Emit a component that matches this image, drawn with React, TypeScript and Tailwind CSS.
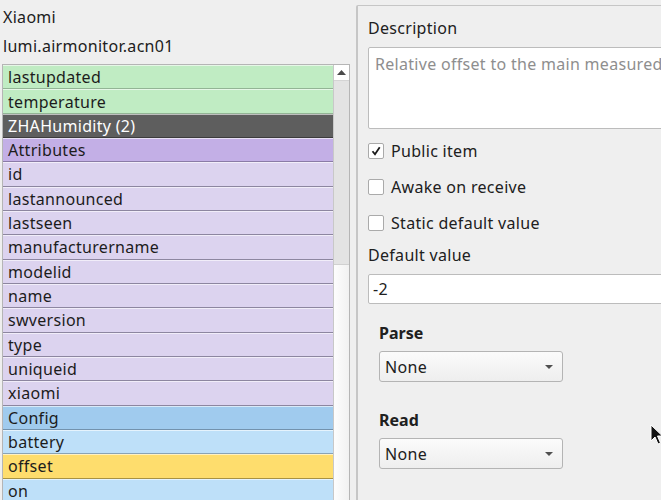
import React from 'react'

type Kind = 'green' | 'dark' | 'group' | 'attr' | 'config' | 'blue' | 'yellow'

const rowStyles: Record<Kind, string> = {
  green: 'bg-[#c0ecc3] border-b-[#93b495] text-[#1c1c1c]',
  dark: 'bg-[#5e5e5e] border-b-[#3c3c3c] text-white',
  group: 'bg-[#c3afe6] border-b-[#8a7ba6] text-[#1c1c1c]',
  attr: 'bg-[#dcd3ef] border-b-[#8d86a0] text-[#1c1c1c]',
  config: 'bg-[#a0cbee] border-b-[#7392ad] text-[#1c1c1c]',
  blue: 'bg-[#bee0f9] border-b-[#89a3b5] text-[#1c1c1c]',
  yellow: 'bg-[#fedd6d] border-b-[#a89243] text-[#1c1c1c]',
}

const rows: { label: string; kind: Kind }[] = [
  { label: 'lastupdated', kind: 'green' },
  { label: 'temperature', kind: 'green' },
  { label: 'ZHAHumidity (2)', kind: 'dark' },
  { label: 'Attributes', kind: 'group' },
  { label: 'id', kind: 'attr' },
  { label: 'lastannounced', kind: 'attr' },
  { label: 'lastseen', kind: 'attr' },
  { label: 'manufacturername', kind: 'attr' },
  { label: 'modelid', kind: 'attr' },
  { label: 'name', kind: 'attr' },
  { label: 'swversion', kind: 'attr' },
  { label: 'type', kind: 'attr' },
  { label: 'uniqueid', kind: 'attr' },
  { label: 'xiaomi', kind: 'attr' },
  { label: 'Config', kind: 'config' },
  { label: 'battery', kind: 'blue' },
  { label: 'offset', kind: 'yellow' },
  { label: 'on', kind: 'blue' },
]

export default function App() {
  return (
    <div
      className="relative w-[661px] h-[500px] overflow-hidden bg-[#efefef] text-[16px] tracking-[0.3px] text-[#202020] flex"
      style={{ fontFamily: '"Noto Sans", "Open Sans", sans-serif' }}
    >
      {/* Left column - device + item list */}
      <div className="w-[350px] flex-shrink-0 pl-[2px] flex flex-col">
        <div className="h-[18px] mt-[8px] pl-[1px] leading-[18px]">Xiaomi</div>
        <div className="h-[18px] mt-[11px] pl-[1px] leading-[18px]">lumi.airmonitor.acn01</div>

        <div className="mt-[9px] flex border-l border-t border-r border-[#b5b5b5] h-[440px]">
          <div className="flex-1 flex flex-col">
            {rows.map((r) => (
              <div
                key={r.label}
                className={`h-[24.33px] flex-shrink-0 flex items-center pl-[5px] border-t border-t-white/60 border-b ${rowStyles[r.kind]}`}
              >
                {r.label}
              </div>
            ))}
          </div>

          {/* Scrollbar */}
          <div className="w-[16px] flex-shrink-0 flex flex-col border-l border-[#c8c8c8]">
            <div className="h-[16px] bg-white border-b border-[#d4d4d4] flex items-center justify-center">
              <svg width="9" height="5" viewBox="0 0 9 5">
                <path d="M0 5 L4.5 0 L9 5 Z" fill="#4a4a4a" />
              </svg>
            </div>
            <div className="h-[183px] bg-[#e3e3e3]" />
            <div className="flex-1 bg-gradient-to-r from-[#fdfdfd] to-[#f1f1f1] border-t border-[#d0d0d0]" />
          </div>
        </div>
      </div>

      {/* Right column - item settings */}
      <div className="ml-[6px] mt-[5px] w-[330px] flex-shrink-0 border-l-2 border-t border-[#c6c6c6] rounded-tl-[2px] pl-[10px] flex flex-col">
        <div className="h-[18px] mt-[13px] leading-[18px]">Description</div>
        <div className="mt-[10px] h-[82px] bg-white border border-[#bcbcbc] rounded-[2px] px-[6px] pt-[7px] leading-[18px] text-[#8e8e8e] whitespace-nowrap overflow-hidden">
          Relative offset to the main measured value
        </div>

        <CheckRow label="Public item" checked className="mt-[14px]" />
        <CheckRow label="Awake on receive" className="mt-[20px]" />
        <CheckRow label="Static default value" className="mt-[20px]" />

        <div className="h-[18px] mt-[15px] leading-[18px]">Default value</div>
        <div className="mt-[10px] h-[30px] bg-white border border-[#bcbcbc] rounded-[2px] pl-[4px] flex items-center">
          -2
        </div>

        <div className="pl-[11px] flex flex-col">
          <div className="h-[18px] mt-[20px] leading-[18px] font-bold tracking-normal">Parse</div>
          <Select className="mt-[9px]" />
          <div className="h-[18px] mt-[29px] leading-[18px] font-bold tracking-normal">Read</div>
          <Select className="mt-[9px]" />
        </div>
      </div>

      {/* Mouse pointer */}
      <svg className="absolute left-[650px] top-[424px]" width="14" height="22" viewBox="0 0 14 22">
        <path d="M1 1 L1 17 L5 13 L8 20 L10.5 19 L7.5 12 L12.5 12 Z" fill="#111" stroke="#fff" strokeWidth="1" />
      </svg>
    </div>
  )
}

function CheckRow({ label, checked, className }: { label: string; checked?: boolean; className?: string }) {
  return (
    <div className={`h-[16px] flex items-center gap-[7px] ${className}`}>
      <span className="w-[16px] h-[16px] bg-white border border-[#aaaaaa] rounded-[2px] flex items-center justify-center">
        {checked && (
          <svg width="10" height="10" viewBox="0 0 10 10">
            <path d="M1.5 5.2 L4 8.3 L8.7 1.3" fill="none" stroke="#1a1a1a" strokeWidth="1.8" />
          </svg>
        )}
      </span>
      <span className="leading-[18px]">{label}</span>
    </div>
  )
}

function Select({ className }: { className?: string }) {
  return (
    <div
      className={`w-[184px] h-[31px] flex items-center justify-between pl-[5px] pr-[9px] bg-gradient-to-b from-[#fbfbfb] to-[#eeeeee] border border-[#b4b4b4] rounded-[3px] ${className}`}
    >
      <span>None</span>
      <svg width="8" height="4" viewBox="0 0 8 4">
        <path d="M0 0 L8 0 L4 4 Z" fill="#505050" />
      </svg>
    </div>
  )
}
